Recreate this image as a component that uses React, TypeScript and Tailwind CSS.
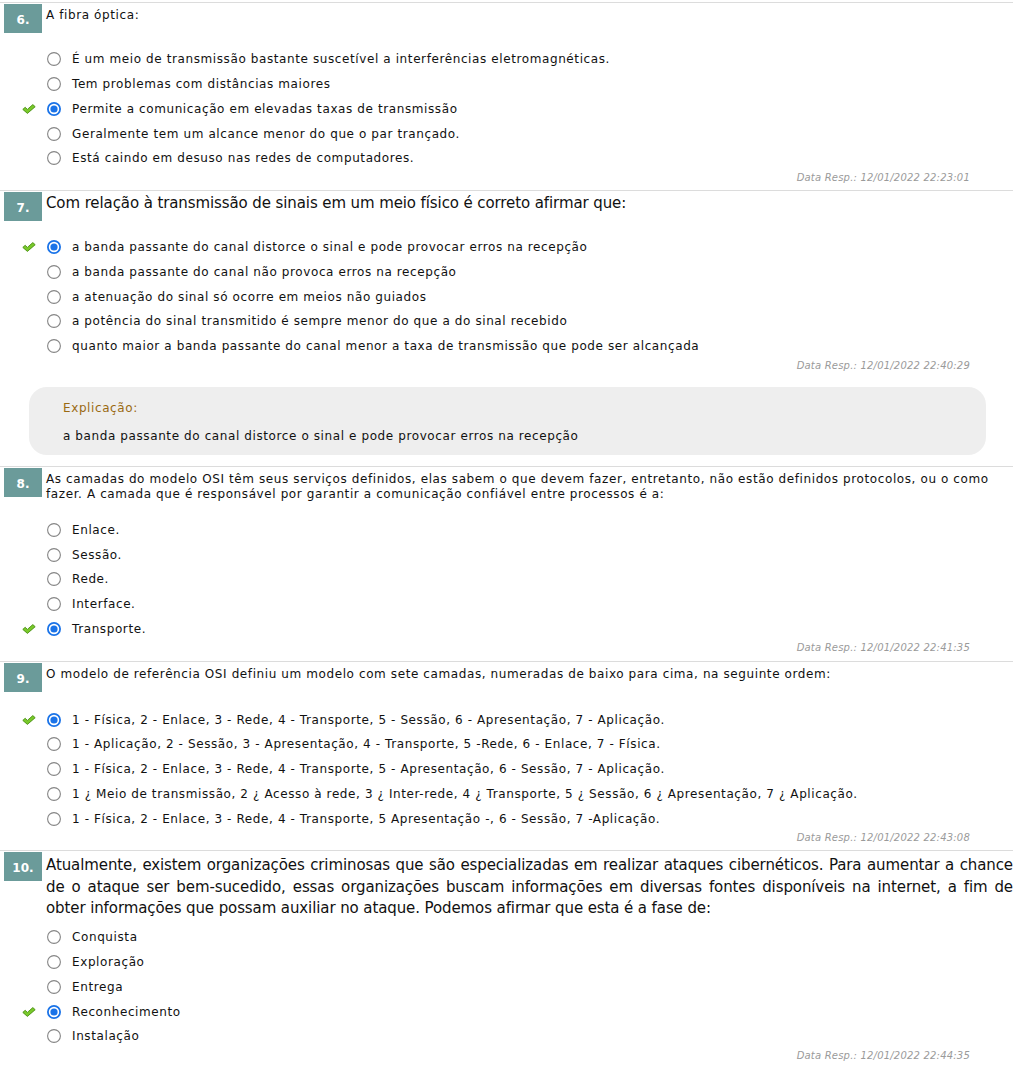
const verdana = "font-['DejaVu_Sans',Verdana,sans-serif]";

type Question = {
  n: string;
  text: string;
  big?: boolean;
  pt: number;
  head: number;
  options: string[];
  correct: number;
  date: string;
  explain?: string;
  after?: number;
};

const questions: Question[] = [
  {
    n: "6.",
    text: "A fibra óptica:",
    pt: 4,
    head: 43,
    options: [
      "É um meio de transmissão bastante suscetível a interferências eletromagnéticas.",
      "Tem problemas com distâncias maiores",
      "Permite a comunicação em elevadas taxas de transmissão",
      "Geralmente tem um alcance menor do que o par trançado.",
      "Está caindo em desuso nas redes de computadores.",
    ],
    correct: 2,
    date: "12/01/2022 22:23:01",
  },
  {
    n: "7.",
    text: "Com relação à transmissão de sinais em um meio físico é correto afirmar que:",
    big: true,
    pt: 1,
    head: 43,
    options: [
      "a banda passante do canal distorce o sinal e pode provocar erros na recepção",
      "a banda passante do canal não provoca erros na recepção",
      "a atenuação do sinal só ocorre em meios não guiados",
      "a potência do sinal transmitido é sempre menor do que a do sinal recebido",
      "quanto maior a banda passante do canal menor a taxa de transmissão que pode ser alcançada",
    ],
    correct: 0,
    date: "12/01/2022 22:40:29",
    explain: "a banda passante do canal distorce o sinal e pode provocar erros na recepção",
  },
  {
    n: "8.",
    text: "As camadas do modelo OSI têm seus serviços definidos, elas sabem o que devem fazer, entretanto, não estão definidos protocolos, ou o como fazer. A camada que é responsável por garantir a comunicação confiável entre processos é a:",
    pt: 4,
    head: 50,
    options: ["Enlace.", "Sessão.", "Rede.", "Interface.", "Transporte."],
    correct: 4,
    date: "12/01/2022 22:41:35",
    after: 7,
  },
  {
    n: "9.",
    text: "O modelo de referência OSI definiu um modelo com sete camadas, numeradas de baixo para cima, na seguinte ordem:",
    pt: 4,
    head: 44,
    options: [
      "1 - Física, 2 - Enlace, 3 - Rede, 4 - Transporte, 5 - Sessão, 6 - Apresentação, 7 - Aplicação.",
      "1 - Aplicação, 2 - Sessão, 3 - Apresentação, 4 - Transporte, 5 -Rede, 6 - Enlace, 7 - Física.",
      "1 - Física, 2 - Enlace, 3 - Rede, 4 - Transporte, 5 - Apresentação, 6 - Sessão, 7 - Aplicação.",
      "1 ¿ Meio de transmissão, 2 ¿ Acesso à rede, 3 ¿ Inter-rede, 4 ¿ Transporte, 5 ¿ Sessão, 6 ¿ Apresentação, 7 ¿ Aplicação.",
      "1 - Física, 2 - Enlace, 3 - Rede, 4 - Transporte, 5 Apresentação -, 6 - Sessão, 7 -Aplicação.",
    ],
    correct: 0,
    date: "12/01/2022 22:43:08",
  },
  {
    n: "10.",
    text: "Atualmente, existem organizações criminosas que são especializadas em realizar ataques cibernéticos. Para aumentar a chance de o ataque ser bem-sucedido, essas organizações buscam informações em diversas fontes disponíveis na internet, a fim de obter informações que possam auxiliar no ataque. Podemos afirmar que esta é a fase de:",
    big: true,
    pt: 3,
    head: 73,
    options: ["Conquista", "Exploração", "Entrega", "Reconhecimento", "Instalação"],
    correct: 3,
    date: "12/01/2022 22:44:35",
  },
];

function Check() {
  return (
    <svg width="14" height="10" viewBox="0 0 14 10">
      <path
        d="M0.8 5.4 L3.2 3.3 L5.4 5.4 L10.8 0.6 L13.2 2.7 L5.4 9.4 Z"
        fill="#79c92a"
        stroke="#4a8f14"
        strokeWidth="0.9"
        strokeLinejoin="round"
      />
    </svg>
  );
}

function Radio({ checked }: { checked: boolean }) {
  return checked ? (
    <svg width="14" height="14" viewBox="0 0 14 14">
      <circle cx="7" cy="7" r="6.1" fill="#fff" stroke="#1a73e8" strokeWidth="1.8" />
      <circle cx="7" cy="7" r="3.6" fill="#1a73e8" />
    </svg>
  ) : (
    <svg width="14" height="14" viewBox="0 0 14 14">
      <circle cx="7" cy="7" r="6.4" fill="#fff" stroke="#858585" strokeWidth="1.1" />
    </svg>
  );
}

function QuestionBlock({ q }: { q: Question }) {
  return (
    <section className="border-t border-[#dcdcdc] pt-px">
      <div className="flex items-start" style={{ height: q.head }}>
        <div className="ml-[4px] flex h-[29px] w-[38px] shrink-0 items-center justify-center bg-[#6b9b9a] pt-[3px] text-[12px] font-bold text-white">
          {q.n}
        </div>
        <p
          className={
            q.big
              ? "ml-[4px] flex-1 text-justify text-[15px] leading-[21.5px] tracking-[-0.1px] text-[#111]"
              : "ml-[4px] flex-1 text-[12px] leading-[15px] tracking-[0.6px] text-[#111]"
          }
          style={{ paddingTop: q.pt }}
        >
          {q.text}
        </p>
      </div>
      <ul>
        {q.options.map((opt, i) => (
          <li key={i} className="flex h-[24.75px] items-center">
            <span className="ml-[22px] flex w-[14px] items-center justify-center">
              {i === q.correct && <Check />}
            </span>
            <span className="ml-[11px] flex">
              <Radio checked={i === q.correct} />
            </span>
            <span className="ml-[11px] text-[12px] tracking-[0.6px] text-[#111]">{opt}</span>
          </li>
        ))}
      </ul>
      <div className="pr-[43px] text-right text-[10px] italic leading-[13px] tracking-[0.2px] text-[#9a9a9a]">
        Data Resp.: {q.date}
      </div>
      {q.explain ? (
        <div className="mb-[11px] ml-[29px] mr-[27px] mt-[15px] h-[68px] rounded-[18px] bg-[#eeeeee] pl-[34px] pt-[13px] text-[12px] tracking-[0.6px]">
          <div className="leading-[16px] text-[#9a6a12]">Explicação:</div>
          <div className="mt-[12px] leading-[16px] text-[#111]">{q.explain}</div>
        </div>
      ) : (
        <div style={{ height: q.after ?? 6 }} />
      )}
    </section>
  );
}

export default function App() {
  return (
    <div className={`min-h-[1065px] bg-white pt-[2px] ${verdana}`}>
      <div className="w-[1013px]">
        {questions.map((q) => (
          <QuestionBlock key={q.n} q={q} />
        ))}
      </div>
    </div>
  );
}
